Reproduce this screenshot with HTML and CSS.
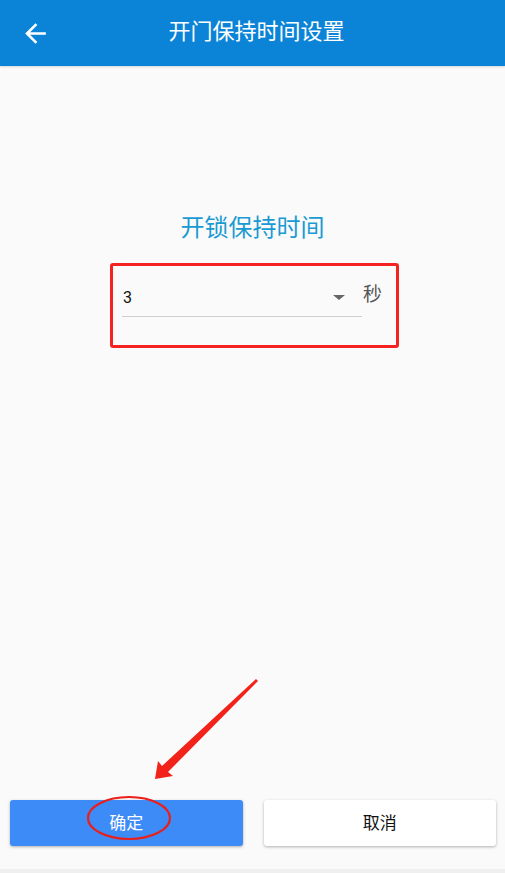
FILE: index.html
```html
<!DOCTYPE html>
<html lang="zh-CN">
<head>
  <meta charset="UTF-8" />
  <meta name="viewport" content="width=device-width, initial-scale=1" />
  <title>开门保持时间设置</title>
  <link rel="stylesheet" href="styles.css">
</head>
<body>
  <div class="page">
    <header class="topbar">
      <button class="back" aria-label="返回">
        <svg width="31" height="31" viewBox="0 0 24 24"><path fill="#fff" d="M20 11H7.83l5.59-5.59L12 4l-8 8 8 8 1.41-1.41L7.83 13H20v-2z"/></svg>
      </button>
      <h1>开门保持时间设置</h1>
    </header>

    <main class="content">
      <h2 class="field-title">开锁保持时间</h2>
      <div class="field-box">
        <div class="select">
          <span class="value">3</span>
          <span class="caret"></span>
        </div>
        <span class="unit">秒</span>
      </div>
    </main>

    <footer class="actions">
      <div class="buttons">
        <button class="btn primary">确定</button>
        <button class="btn">取消</button>
      </div>
      <div class="strip"></div>
    </footer>

    <svg class="marks" width="505" height="873" viewBox="0 0 505 873">
      <path fill="#f2231b" d="M256 679 L258 681 L168 772 L173 776 L155 779 L158 761 L162 766 Z"/>
      <ellipse cx="129" cy="818" rx="41" ry="21" fill="none" stroke="#ea1f1a" stroke-width="2.2"/>
    </svg>
  </div>
</body>
</html>
```

FILE: styles.css
```css
:root {
  --bar: #0b84d8;
  --blue: #3d8bf7;
  --teal: #1a9ad2;
  --red: #f52222;
}
body {
  margin: 0;
  font-family: Roboto, "Noto Sans CJK SC", sans-serif;
  background: #fafafa;
}
.page {
  position: relative;
  width: 505px;
  height: 873px;
  display: flex;
  flex-direction: column;
  overflow: hidden;
}
.topbar {
  height: 66px;
  flex: none;
  background: var(--bar);
  display: grid;
  grid-template-columns: 66px 1fr 66px;
  align-items: center;
  box-shadow: 0 1px 2px rgba(0,0,0,0.15);
}
.back {
  background: none;
  border: none;
  padding: 0 0 0 20px;
  height: 31px;
  display: flex;
  align-items: center;
  cursor: pointer;
}
.topbar h1 {
  margin: 0 0 2px;
  grid-column: 2;
  text-align: center;
  padding-left: 8px;
  color: #fff;
  font-size: 22px;
  font-weight: 400;
  line-height: 30px;
}
.content {
  flex: 1;
  padding-top: 146px;
}
.field-title {
  margin: 0;
  text-align: center;
  color: var(--teal);
  font-size: 24px;
  font-weight: 400;
  line-height: 32px;
}
.field-box {
  margin: 19px 0 0 110px;
  width: 274px;
  border: 3px solid var(--red);
  border-radius: 3px;
  padding: 12px 0 28px 9px;
  display: flex;
  align-items: flex-start;
}
.select {
  width: 240px;
  height: 39px;
  border-bottom: 1px solid #cfcfcf;
  display: flex;
  align-items: center;
  padding-left: 1px;
  box-sizing: border-box;
}
.value {
  flex: 1;
  font-size: 16px;
  color: #111;
}
.caret {
  width: 0;
  height: 0;
  border-left: 6px solid transparent;
  border-right: 6px solid transparent;
  border-top: 5px solid #666;
  margin-right: 17px;
}
.unit {
  margin-left: 1px;
  font-size: 19px;
  color: #555;
  line-height: 34px;
}
.actions {
  flex: none;
}
.buttons {
  display: flex;
  gap: 21px;
  padding: 0 9px 0 10px;
}
.btn {
  flex: 1;
  height: 46px;
  border: none;
  border-radius: 3px;
  padding: 0 0 4px;
  background: #fff;
  color: #111;
  font-family: "Noto Sans CJK SC", sans-serif;
  font-size: 17px;
  box-shadow: 0 1px 3px rgba(0,0,0,0.3);
  cursor: pointer;
}
.btn.primary {
  background: var(--blue);
  color: #fff;
}
.strip {
  margin-top: 23px;
  height: 4px;
  background: #efefef;
}
.marks {
  position: absolute;
  left: 0;
  top: 0;
  pointer-events: none;
}
```
